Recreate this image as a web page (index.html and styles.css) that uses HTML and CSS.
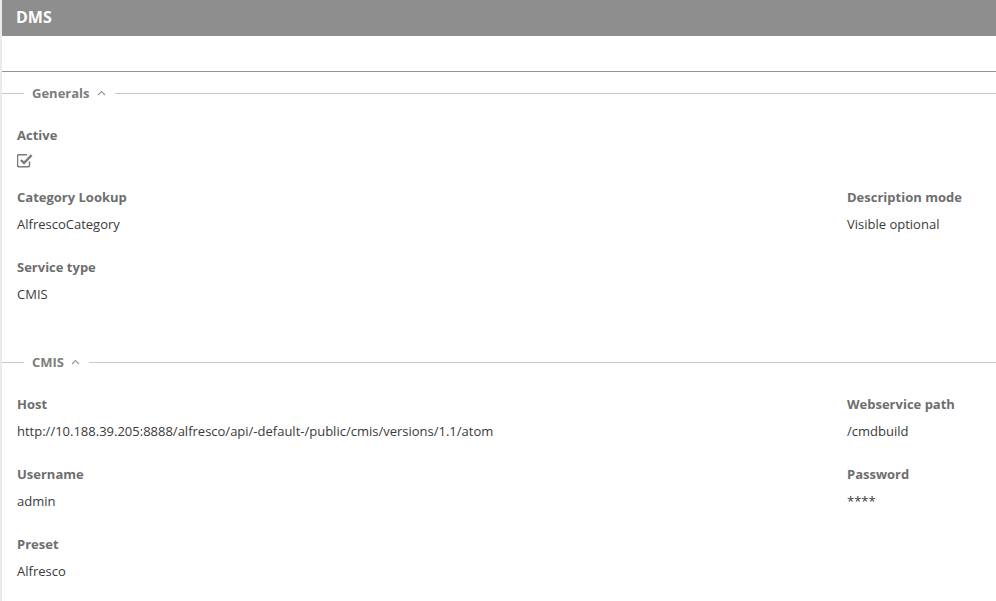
FILE: index.html
```html
<!DOCTYPE html>
<html lang="en">
<head>
    <meta charset="UTF-8">
    <meta name="viewport" content="width=device-width, initial-scale=1.0">
    <title>DMS</title>
    <link rel="stylesheet" href="styles.css">
</head>
<body>
    <div class="panel">
        <div class="panel-header">DMS</div>
        <div class="toolbar"></div>

        <!-- Generals -->
        <div class="fieldset">
            <div class="legend">
                <span class="legend-line legend-line-start"></span>
                <span class="legend-title">Generals</span>
                <svg class="legend-toggle" width="9" height="6" viewBox="0 0 9 6"><path d="M1 5 L4.5 1.5 L8 5" fill="none" stroke="#9a9a9a" stroke-width="1.2"/></svg>
                <span class="legend-line"></span>
            </div>
            <div class="fieldset-body">
                <div class="field field-check">
                    <div class="field-label">Active</div>
                    <div class="field-value">
                        <svg width="16" height="15" viewBox="0 0 16 15">
                            <path d="M12.5 8.5v4a1.2 1.2 0 0 1-1.2 1.2h-9.6a1.2 1.2 0 0 1-1.2-1.2v-9.6a1.2 1.2 0 0 1 1.2-1.2h8.5" fill="none" stroke="#7b7b7b" stroke-width="1.5"/>
                            <path d="M4 7 L7 10 L14.6 2.2" fill="none" stroke="#7b7b7b" stroke-width="2.4"/>
                        </svg>
                    </div>
                </div>
                <div></div>
                <div class="field">
                    <div class="field-label">Category Lookup</div>
                    <div class="field-value">AlfrescoCategory</div>
                </div>
                <div class="field">
                    <div class="field-label">Description mode</div>
                    <div class="field-value">Visible optional</div>
                </div>
                <div class="field">
                    <div class="field-label">Service type</div>
                    <div class="field-value">CMIS</div>
                </div>
            </div>
        </div>

        <!-- CMIS -->
        <div class="fieldset">
            <div class="legend">
                <span class="legend-line legend-line-start"></span>
                <span class="legend-title">CMIS</span>
                <svg class="legend-toggle" width="9" height="6" viewBox="0 0 9 6"><path d="M1 5 L4.5 1.5 L8 5" fill="none" stroke="#9a9a9a" stroke-width="1.2"/></svg>
                <span class="legend-line"></span>
            </div>
            <div class="fieldset-body">
                <div class="field">
                    <div class="field-label">Host</div>
                    <div class="field-value">http://10.188.39.205:8888/alfresco/api/-default-/public/cmis/versions/1.1/atom</div>
                </div>
                <div class="field">
                    <div class="field-label">Webservice path</div>
                    <div class="field-value">/cmdbuild</div>
                </div>
                <div class="field">
                    <div class="field-label">Username</div>
                    <div class="field-value">admin</div>
                </div>
                <div class="field">
                    <div class="field-label">Password</div>
                    <div class="field-value">****</div>
                </div>
                <div class="field">
                    <div class="field-label">Preset</div>
                    <div class="field-value">Alfresco</div>
                </div>
            </div>
        </div>
    </div>
</body>
</html>
```

FILE: styles.css
```css
/* Estilos base */
body {
    margin: 0;
    background-color: #ebebeb;
    font-family: 'Open Sans', sans-serif;
    font-size: 13px;
    color: #3a3a3a;
}

/* Panel principal */
.panel {
    margin-left: 2px;
    min-height: 601px;
    background-color: #ffffff;
}

.panel-header {
    height: 36px;
    line-height: 34px;
    padding-left: 14px;
    background-color: #8e8e8e;
    color: #ffffff;
    font-size: 16px;
    font-weight: 700;
}

.toolbar {
    height: 35px;
    border-bottom: 1px solid #959595;
}

/* Fieldsets */
.fieldset {
    margin-top: 11px;
}

.fieldset + .fieldset {
    margin-top: 24px;
}

.legend {
    display: flex;
    align-items: center;
    height: 20px;
}

.legend-line {
    flex: 1;
    height: 1px;
    background-color: #c9c9c9;
}

.legend-line-start {
    flex: 0 0 22px;
    margin-right: 8px;
}

.legend-title {
    font-weight: 700;
    color: #7d7d7d;
}

.legend-toggle {
    margin: 0 9px 0 7px;
}

.fieldset-body {
    display: grid;
    grid-template-columns: 1fr 134px;
    padding: 23px 15px 0 15px;
}

/* Campos */
.field {
    margin-bottom: 25px;
}

.field-check {
    margin-bottom: 17px;
}

.field-label {
    line-height: 18px;
    font-weight: 700;
    color: #6e6e6e;
}

.field-value {
    margin-top: 9px;
    height: 18px;
    line-height: 18px;
    white-space: nowrap;
}

.field-check .field-value svg {
    display: block;
    margin-top: 1px;
}
```
